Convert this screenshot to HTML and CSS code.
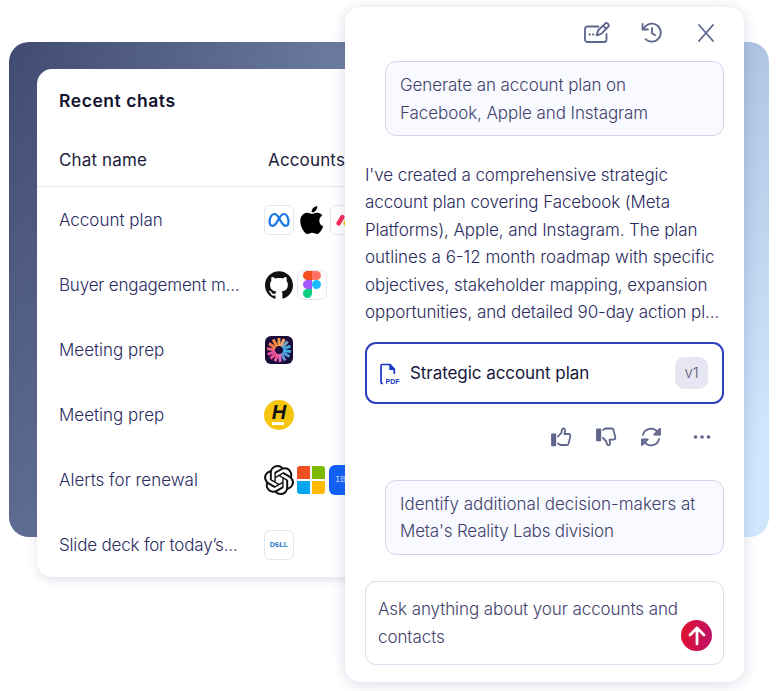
FILE: index.html
```html
<!DOCTYPE html>
<html lang="en">
<head>
  <meta charset="UTF-8">
  <title>Recent chats</title>
  <link rel="stylesheet" href="styles.css">
</head>
<body>
  <div class="stage">
    <div class="backdrop"></div>

    <!-- Recent chats table -->
    <section class="chats">
      <h2>Recent chats</h2>
      <div class="row head">
        <span class="name">Chat name</span>
        <span>Accounts</span>
      </div>
      <div class="row">
        <span class="name">Account plan</span>
        <div class="logos">
          <span class="tile">
            <svg width="22" height="16" viewBox="0 0 22 16" fill="none" stroke="#1877e8" stroke-width="2.2"><path d="M11 6C9.5 3.2 8 2 6.2 2 3.4 2 1.6 6 1.6 9.6 1.6 12.2 2.7 13.8 4.5 13.8 6.7 13.8 8 11.8 11 6.7 13 3.2 14.2 2 16 2c2.8 0 4.5 4 4.5 7.6 0 2.7-1 4.2-2.8 4.2-2.2 0-3.6-2.2-6.7-7.6"/></svg>
          </span>
          <svg class="logo apple" viewBox="2.5 0 19.5 24" fill="#000"><path d="M12.152 6.896c-.948 0-2.415-1.078-3.96-1.04-2.04.027-3.91 1.183-4.961 3.014-2.117 3.675-.546 9.103 1.519 12.09 1.013 1.454 2.208 3.09 3.792 3.039 1.52-.065 2.09-.987 3.935-.987 1.831 0 2.35.987 3.96.948 1.637-.026 2.676-1.48 3.676-2.948 1.156-1.688 1.636-3.325 1.662-3.415-.039-.013-3.182-1.221-3.22-4.857-.026-3.04 2.48-4.494 2.597-4.559-1.429-2.09-3.623-2.324-4.39-2.376-2-.156-3.675 1.09-4.61 1.09zM15.53 3.83c.843-1.012 1.4-2.427 1.245-3.83-1.207.052-2.662.805-3.532 1.818-.78.896-1.454 2.338-1.273 3.714 1.338.104 2.715-.688 3.559-1.701"/></svg>
          <span class="tile">
            <svg width="22" height="14" viewBox="0 0 22 14" fill="none" stroke-width="4.4" stroke-linecap="round"><path stroke="#f62b54" d="M4.500 10.500 8.500 4"/><path stroke="#ffcc00" d="M11.500 10.500 15.500 4"/><path stroke="#00c875" d="M19.500 10.500v.1"/></svg>
          </span>
        </div>
      </div>
      <div class="row">
        <span class="name tight">Buyer engagement m...</span>
        <div class="logos">
          <svg class="logo github" viewBox="0 0 24 24" fill="#111"><path d="M12 .297c-6.63 0-12 5.373-12 12 0 5.303 3.438 9.8 8.205 11.385.6.113.82-.258.82-.577 0-.285-.01-1.04-.015-2.04-3.338.724-4.042-1.61-4.042-1.61C4.422 18.07 3.633 17.7 3.633 17.7c-1.087-.744.084-.729.084-.729 1.205.084 1.838 1.236 1.838 1.236 1.07 1.835 2.809 1.305 3.495.998.108-.776.417-1.305.76-1.605-2.665-.3-5.466-1.332-5.466-5.93 0-1.31.465-2.38 1.235-3.22-.135-.303-.54-1.523.105-3.176 0 0 1.005-.322 3.3 1.23.96-.267 1.98-.399 3-.405 1.02.006 2.04.138 3 .405 2.28-1.552 3.285-1.23 3.285-1.23.645 1.653.24 2.873.12 3.176.765.84 1.23 1.91 1.23 3.22 0 4.61-2.805 5.625-5.475 5.92.42.36.81 1.096.81 2.22 0 1.606-.015 2.896-.015 3.286 0 .315.21.69.825.57C20.565 22.092 24 17.592 24 12.297c0-6.627-5.373-12-12-12"/></svg>
          <span class="tile">
            <svg width="18" height="27" viewBox="0 0 18 27"><path fill="#f24e1e" d="M9 0H4.500a4.500 4.500 0 0 0 0 9H9z"/><path fill="#ff7262" d="M9 0h4.500a4.500 4.500 0 0 1 0 9H9z"/><path fill="#a259ff" d="M9 9H4.500a4.500 4.500 0 0 0 0 9H9z"/><circle fill="#1abcfe" cx="13.500" cy="13.500" r="4.500"/><path fill="#0acf83" d="M9 18H4.500A4.500 4.500 0 1 0 9 22.500z"/></svg>
          </span>
        </div>
      </div>
      <div class="row">
        <span class="name">Meeting prep</span>
        <div class="logos">
          <svg class="logo burst" viewBox="0 0 28 28">
            <rect width="28" height="28" rx="6" fill="#1b0b3b"/>
            <g stroke-width="2.900">
              <path stroke="#f9a04b" d="M14 10V2"/>
              <path stroke="#f3a774" d="m15.700 10.300 3.500-7.300"/>
              <path stroke="#70a8c8" d="m17.200 11.500 5.500-6"/>
              <path stroke="#43a9dc" d="m18 13 7.500-2.900"/>
              <path stroke="#3eb2e6" d="M18 14.700l8 .9"/>
              <path stroke="#4a9fdc" d="m17.500 16.300 6.900 4.300"/>
              <path stroke="#6e8fd4" d="m16.200 17.500 4 7"/>
              <path stroke="#e06abb" d="m14.500 18 .7 8"/>
              <path stroke="#ee5a9c" d="m12.700 17.800-2.600 7.500"/>
              <path stroke="#ef4d97" d="m11.200 16.900-5.700 5.700"/>
              <path stroke="#e84fa2" d="m10.300 15.500-7.700 2.800"/>
              <path stroke="#ef6178" d="m10 13.700-8-.9"/>
              <path stroke="#f57b4f" d="M10.600 12 4 7.500"/>
              <path stroke="#f88f3e" d="m12 10.500-3.900-7"/>
            </g>
          </svg>
        </div>
      </div>
      <div class="row">
        <span class="name">Meeting prep</span>
        <div class="logos"><span class="hertz"><b>H</b><i></i></span></div>
      </div>
      <div class="row">
        <span class="name">Alerts for renewal</span>
        <div class="logos">
          <svg class="logo" viewBox="0 0 24 24" fill="#111"><path d="M22.2819 9.8211a5.9847 5.9847 0 0 0-.5157-4.9108 6.0462 6.0462 0 0 0-6.5098-2.9A6.0651 6.0651 0 0 0 4.9807 4.1818a5.9847 5.9847 0 0 0-3.9977 2.9 6.0462 6.0462 0 0 0 .7427 7.0966 5.98 5.98 0 0 0 .511 4.9107 6.051 6.051 0 0 0 6.5146 2.9001A5.9847 5.9847 0 0 0 13.2599 24a6.0557 6.0557 0 0 0 5.7718-4.2058 5.9894 5.9894 0 0 0 3.9977-2.9001 6.0557 6.0557 0 0 0-.7475-7.0729zm-9.022 12.6081a4.4755 4.4755 0 0 1-2.8764-1.0408l.1419-.0804 4.7783-2.7582a.7948.7948 0 0 0 .3927-.6813v-6.7369l2.02 1.1686a.071.071 0 0 1 .038.052v5.5826a4.504 4.504 0 0 1-4.4945 4.4944zm-9.6607-4.1254a4.4708 4.4708 0 0 1-.5346-3.0137l.142.0852 4.783 2.7582a.7712.7712 0 0 0 .7806 0l5.8428-3.3685v2.3324a.0804.0804 0 0 1-.0332.0615L9.74 19.9502a4.4992 4.4992 0 0 1-6.1408-1.6464zM2.3408 7.8956a4.485 4.485 0 0 1 2.3655-1.9728V11.6a.7664.7664 0 0 0 .3879.6765l5.8144 3.3543-2.0201 1.1685a.0757.0757 0 0 1-.071 0l-4.8303-2.7865A4.504 4.504 0 0 1 2.3408 7.872zm16.5963 3.8558L13.1038 8.364 15.1192 7.2a.0757.0757 0 0 1 .071 0l4.8303 2.7913a4.4944 4.4944 0 0 1-.6765 8.1042v-5.6772a.79.79 0 0 0-.407-.667zm2.0107-3.0231l-.142-.0852-4.7735-2.7818a.7759.7759 0 0 0-.7854 0L9.409 9.2297V6.8974a.0662.0662 0 0 1 .0284-.0615l4.8303-2.7866a4.4992 4.4992 0 0 1 6.6802 4.66zM8.3065 12.863l-2.02-1.1638a.0804.0804 0 0 1-.038-.0567V6.0742a4.4992 4.4992 0 0 1 7.3757-3.4537l-.142.0805L8.704 5.459a.7948.7948 0 0 0-.3927.6813zm1.0976-2.3654l2.602-1.4998 2.6069 1.4998v2.9994l-2.5974 1.4997-2.6067-1.4997Z"/></svg>
          <span class="windows"><i class="red"></i><i class="green"></i><i class="blue"></i><i class="yellow"></i></span>
          <span class="ibm">IBM</span>
        </div>
      </div>
      <div class="row">
        <span class="name tight">Slide deck for today’s...</span>
        <div class="logos"><span class="tile dell">D<em>E</em>LL</span></div>
      </div>
    </section>

    <!-- Assistant panel -->
    <section class="assistant">
      <header class="toolbar">
        <svg width="26" height="22" viewBox="0 0 26 22"><path d="M14.500 4.500H3.500A2.500 2.500 0 0 0 1 7v10.500A2.500 2.500 0 0 0 3.500 20h16.500a2.500 2.500 0 0 0 2.500-2.500V12"/><path d="m13 13.500 1-5 6.800-6.700a2.200 2.200 0 0 1 3.200 3.200l-6.500 6.700zM19 3.600l3.200 3.200"/><path class="dots" d="M5.500 12.500h.4M9 12.500h.4M12.500 12.500h.4"/></svg>
        <svg width="22" height="22" viewBox="0 0 22 22"><path d="M3 6.200a9 9 0 1 1 1.500 10.900M1.500 2v5.500h5.500M11 6v5.300l3.200 2"/></svg>
        <svg width="16" height="18" viewBox="0 0 16 18"><path d="m1 1 14 16M15 1 1 17"/></svg>
      </header>

      <div class="bubble snug">Generate an account plan on<br>Facebook, Apple and Instagram</div>

      <p class="answer">
        I've created a comprehensive strategic<br>
        account plan covering Facebook (Meta<br>
        Platforms), Apple, and Instagram. The plan<br>
        <span class="wide">outlines a 6-12 month roadmap with specific</span><br>
        objectives, stakeholder mapping, expansion<br>
        opportunities, and detailed 90-day action pl...
      </p>

      <div class="file">
        <svg width="22" height="22" viewBox="0 0 22 22"><path d="M4 20.500H3.300A1.300 1.300 0 0 1 2 19.200V2.800A1.300 1.300 0 0 1 3.300 1.500h7.700l4.300 4.700V11" fill="none" stroke="#1b35c4" stroke-width="1.700"/><path d="M10.300 1.200V7H16z" fill="#1b35c4"/><text x="6.500" y="21">PDF</text></svg>
        <span class="file-name">Strategic account plan</span>
        <span class="version">v1</span>
      </div>

      <div class="actions">
        <svg width="22" height="20" viewBox="0 0 22 20"><path class="solid" d="M2 7.500h3.300v10.800H2z"/><path d="M8 9.500 11.300 6l.8-3.500c.4-1.700 3-1.300 3 .8L14.500 7h4c1.500 0 2.100 1.100 1.800 2.400l-1.700 7c-.3 1.100-1 1.600-2.100 1.600H10.300L8 16.500"/></svg>
        <svg width="22" height="20" viewBox="0 0 22 20"><path class="solid" d="M2 2.500h3.300v10.800H2z"/><path d="M8 3 10.300 1.500h6.200c1.100 0 1.800.6 2 1.600l1.800 7c.3 1.400-.4 2.500-1.800 2.500h-4l.6 3.600c.3 2.200-2.300 2.700-3 1L11 14l-3-3"/></svg>
        <svg width="22" height="20" viewBox="0 0 22 20"><path d="M3 7.800A8.200 8.200 0 0 1 17.500 5l2 2.300M20 2v5.700h-5.700zM19 12.200A8.200 8.200 0 0 1 4.500 15l-2-2.300M2 18v-5.700h5.700z"/></svg>
        <svg width="18" height="20" viewBox="0 0 18 20"><path class="dots" d="M2.500 10h.1M9 10h.1M15.500 10h.1"/></svg>
      </div>

      <div class="bubble">Identify additional decision-makers at<br><span class="tight">Meta's Reality Labs division</span></div>

      <div class="prompt">
        <p class="snug">Ask anything about your accounts and<br>contacts</p>
        <button class="send" aria-label="Send"><svg width="18" height="20" viewBox="0 0 18 20"><path d="M9 18V2M2 9l7-7 7 7"/></svg></button>
      </div>
    </section>
  </div>
</body>
</html>
```
FILE: styles.css
```css
* { box-sizing: border-box; }
body {
  margin: 0;
  background: #fff;
  color: #2a2b60;
  font-family: Inter, "Liberation Sans", sans-serif;
  font-size: 17px;
  font-weight: 300;
  overflow: hidden;
}
h2, p { margin: 0; }
svg { display: block; flex: none; }

/* the three layers share one grid cell */
.stage {
  display: grid;
  width: 778px;
  height: 691px;
}
.stage > * { grid-area: 1 / 1; }
.backdrop {
  margin: 42px 9px 154px;
  border-radius: 20px;
  background: linear-gradient(115deg, #414b72 0%, #65749a 30%, #a9bedd 72%, #cfe6fd 95%);
}
.tight { letter-spacing: -0.18px; }
.snug { letter-spacing: -0.08px; }

.chats {
  width: 380px;
  height: 508px;
  margin: 69px 0 0 37px;
  background: #fff;
  border-radius: 15px;
  box-shadow: 0 3px 10px rgba(70, 75, 130, 0.16);
}
.chats h2 {
  height: 64px;
  padding-left: 22px;
  font-size: 17.5px;
  font-weight: 600;
  line-height: 64px;
  letter-spacing: 0.55px;
  color: #13122f;
}
.row {
  display: flex;
  align-items: center;
  height: 65px;
  padding-left: 22px;
  white-space: nowrap;
}
.head {
  height: 54px;
  border-bottom: 1px solid #e7e7ee;
  font-weight: 400;
  letter-spacing: 0.15px;
  color: #1c1b3c;
}
.name { width: 205px; }
.head .name { width: 209px; }
.logos {
  display: flex;
  align-items: center;
  gap: 3px;
}
.tile {
  display: flex;
  align-items: center;
  justify-content: center;
  width: 30px;
  height: 30px;
  border: 1px solid #e6e6ee;
  border-radius: 6px;
  background: #fff;
}
.logo { width: 30px; height: 30px; }
.apple { padding: 1px 2px; }
.github, .burst { padding: 1px; }
.hertz {
  display: flex;
  flex-direction: column;
  align-items: center;
  width: 30px;
  height: 30px;
  padding-top: 4px;
  border-radius: 50%;
  background: #f5c50f;
  color: #111;
}
.hertz b {
  font: italic bold 20px/17px "Liberation Sans", sans-serif;
}
.hertz i {
  width: 12px;
  height: 3px;
  margin: 1px 3px 0 0;
  background: #fff;
}
.windows {
  display: grid;
  grid-template-columns: 13px 13px;
  grid-template-rows: 13px 13px;
  gap: 2px;
  margin: 0 1px 0 0;
  border-radius: 3px;
  overflow: hidden;
}
.red { background: #f04e23; }
.green { background: #7cb900; }
.blue { background: #05a6f0; }
.yellow { background: #ffb901; }
.ibm {
  width: 30px;
  height: 30px;
  padding-right: 2px;
  border-radius: 6px;
  background: #1261f5;
  color: #b9d0ff;
  font: 9px/30px "Liberation Mono", monospace;
  text-align: center;
}
.dell {
  color: #1379c4;
  font: bold 7px "Liberation Sans", sans-serif;
}
.dell em { transform: rotate(-30deg); font-style: normal; }

.assistant {
  width: 399px;
  height: 675px;
  margin: 7px 0 0 345px;
  padding: 0 20px;
  background: #fff;
  border-radius: 16px;
  box-shadow: 0 2px 14px rgba(70, 75, 140, 0.2);
  line-height: 27.5px;
  white-space: nowrap;
}
.toolbar, .actions {
  display: flex;
  align-items: center;
  justify-content: flex-end;
}
.toolbar svg, .actions svg {
  fill: none;
  stroke: #5f658a;
  stroke-width: 1.8;
  stroke-linecap: round;
  stroke-linejoin: round;
}
.toolbar .dots { stroke-width: 2; }
.actions .dots { stroke-width: 3.6; }
.toolbar {
  height: 54px;
  gap: 31px;
  padding: 0 10px 2px 0;
}
.toolbar svg:last-child { margin-left: 4px; }
.actions .solid { fill: #5f658a; }
.bubble {
  height: 75px;
  margin-left: 20px;
  padding: 10px 14px;
  border: 1.5px solid #d5d4ec;
  border-radius: 11px;
  background: #f9faff;
  color: #3f416c;
}
.answer {
  padding-top: 25.5px;
  letter-spacing: -0.09px;
}
.answer .wide { letter-spacing: 0; }
.file {
  display: flex;
  align-items: center;
  height: 62px;
  margin-top: 15.5px;
  padding: 2px 14px 0 12px;
  border: 2px solid #2e3fbd;
  border-radius: 11px;
  color: #16163d;
}
.file text {
  fill: #1b35c4;
  font: bold 7px "Liberation Sans", sans-serif;
}
.file-name {
  margin-left: 9px;
  font-weight: 400;
  letter-spacing: -0.06px;
}
.version {
  width: 33px;
  height: 32px;
  margin: -2px 0 0 auto;
  border-radius: 9px;
  background: #e8e6f3;
  color: #5a5a78;
  font-size: 15px;
  line-height: 32px;
  text-align: center;
}
.actions {
  height: 66px;
  gap: 23px;
  padding-right: 13px;
}
.actions svg:last-child { margin-left: 8px; }
.actions + .bubble {
  margin-top: 9.5px;
  line-height: 27px;
}
.prompt {
  display: flex;
  align-items: flex-end;
  height: 84px;
  margin-top: 26.5px;
  padding: 0 11px 13px 12px;
  border: 1.5px solid #dddcf0;
  border-radius: 11px;
  color: #3f416c;
}
.send {
  display: flex;
  align-items: center;
  justify-content: center;
  flex: none;
  width: 31px;
  height: 31px;
  margin-left: auto;
  padding: 0;
  border: none;
  border-radius: 50%;
  background: linear-gradient(100deg, #e0142f, #be1068);
}
.send svg {
  fill: none;
  stroke: #fff;
  stroke-width: 2.8;
  stroke-linecap: round;
  stroke-linejoin: round;
}
```
